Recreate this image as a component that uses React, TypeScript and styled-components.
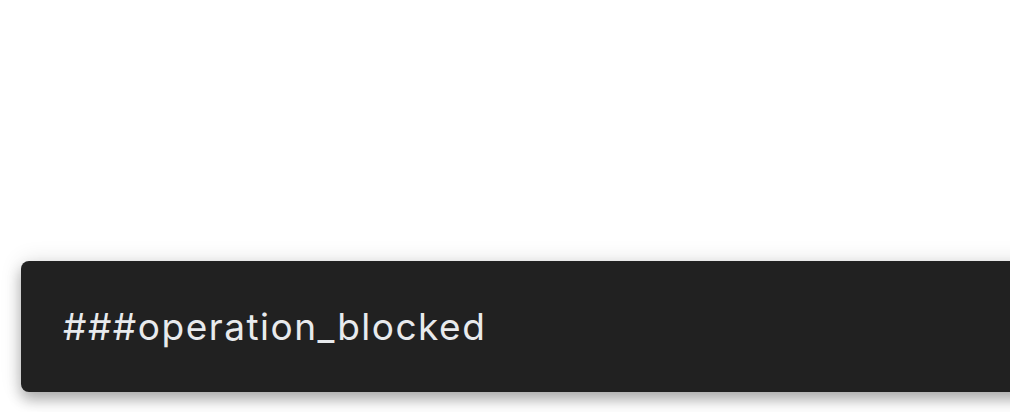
import React from "react";
import styled, { createGlobalStyle } from "styled-components";

const Global = createGlobalStyle`
  html, body { margin: 0; padding: 0; background: #ffffff; overflow: hidden; }
  #root { width: 1010px; height: 412px; }
`;

const Page = styled.div`
  width: 1010px;
  height: 412px;
  box-sizing: border-box;
  display: flex;
  flex-direction: column;
  justify-content: flex-end;
  padding: 0 0 20px 21px;
  overflow: hidden;
`;

const Snackbar = styled.div`
  width: 1100px;
  flex: 0 0 auto;
  height: 131px;
  box-sizing: border-box;
  display: flex;
  align-items: center;
  padding: 0 0 0 42px;
  background: #212121;
  border-radius: 8px;
  box-shadow: 0 8px 14px rgba(0, 0, 0, 0.28), 0 0 22px rgba(0, 0, 0, 0.12);
`;

const Message = styled.span`
  font-family: Inter, "Open Sans", sans-serif;
  font-size: 37px;
  letter-spacing: 1.5px;
  color: #e8eaed;
  white-space: nowrap;
`;

export default function App() {
  return (
    <>
      <Global />
      <Page>
        <Snackbar>
          <Message>###operation_blocked</Message>
        </Snackbar>
      </Page>
    </>
  );
}
